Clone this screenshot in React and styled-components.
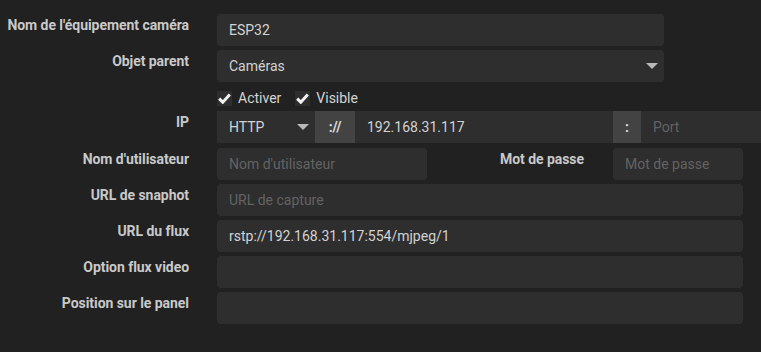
import React from "react";
import styled, { createGlobalStyle } from "styled-components";

const Global = createGlobalStyle`
  html, body { margin: 0; padding: 0; background: #212121; }
  body { font-family: Roboto, "Noto Sans", sans-serif; overflow: hidden; }
  * { box-sizing: border-box; }
`;

const Page = styled.div`
  width: 761px;
  height: 352px;
  overflow: hidden;
  background: #212121;
  padding-top: 14px;
`;

const Form = styled.div`
  display: flex;
  flex-direction: column;
  gap: 4px;
`;

const Row = styled.div`
  display: grid;
  grid-template-columns: 189px ${(p) => p.$width || "526px"};
  column-gap: 28px;
  align-items: start;
  margin-top: ${(p) => p.$mt || 0}px;
`;

const Label = styled.div`
  text-align: right;
  font-weight: 700;
  font-size: 14px;
  line-height: 16px;
  color: #c9c9c9;
  padding-top: 3px;
  white-space: nowrap;
  letter-spacing: -0.05px;
`;

const Field = styled.div`
  height: 32px;
  border-radius: 4px;
  background: #2e2e2e;
  display: flex;
  align-items: center;
  padding: 0 12px;
  font-size: 14px;
  color: ${(p) => (p.$placeholder ? "#636363" : "#d2d2d2")};
  width: ${(p) => p.$w || "auto"};
  flex: ${(p) => (p.$w ? "none" : "1")};
  position: relative;
`;

const Arrow = styled.span`
  position: absolute;
  right: ${(p) => p.$right || 6}px;
  top: 50%;
  margin-top: -3px;
  width: 0;
  height: 0;
  border-left: 6px solid transparent;
  border-right: 6px solid transparent;
  border-top: 6px solid #b8b8b8;
`;

const Checks = styled.div`
  display: flex;
  align-items: center;
  gap: 14px;
  height: 24px;
`;

const Check = styled.label`
  display: flex;
  align-items: center;
  gap: 6px;
  font-size: 14px;
  color: #d4d4d4;
`;

const Box = styled.span`
  width: 15px;
  height: 15px;
  background: #2e2e2e;
  display: flex;
  align-items: center;
  justify-content: center;
`;

const Group = styled.div`
  display: flex;
  height: 32px;
  width: 560px;
`;

const GroupSelect = styled(Field)`
  border-radius: 0;
`;

const Addon = styled.div`
  width: ${(p) => p.$w}px;
  flex: none;
  background: #434343;
  color: #dcdcdc;
  font-size: 14px;
  display: flex;
  align-items: center;
  justify-content: center;
  font-weight: ${(p) => (p.$bold ? 700 : 400)};
`;

const Split = styled.div`
  display: flex;
  align-items: flex-start;
`;

const SubLabel = styled(Label)`
  width: 157px;
  margin-right: 29px;
`;

const CheckIcon = () => (
  <svg width="13" height="11" viewBox="0 0 13 11">
    <path d="M1.2 5.6 L4.8 9.2 L11.8 1.6" fill="none" stroke="#f2f2f2" strokeWidth="3" strokeLinejoin="miter" />
  </svg>
);

export default function App() {
  return (
    <Page>
      <Global />
      <Form>
        <Row $width="447px">
          <Label>Nom de l'équipement caméra</Label>
          <Field>ESP32</Field>
        </Row>
        <Row $width="447px">
          <Label>Objet parent</Label>
          <Field>
            Caméras
            <Arrow />
          </Field>
        </Row>
        <Row>
          <div />
          <Checks>
            <Check>
              <Box><CheckIcon /></Box>
              Activer
            </Check>
            <Check>
              <Box><CheckIcon /></Box>
              Visible
            </Check>
          </Checks>
        </Row>
        <Row $mt={-3} $width="560px">
          <Label>IP</Label>
          <Group>
            <GroupSelect $w="98px">
              HTTP
              <Arrow $right={6} />
            </GroupSelect>
            <Addon $w={40} $bold>://</Addon>
            <GroupSelect $w="258px">192.168.31.117</GroupSelect>
            <Addon $w={28} $bold>:</Addon>
            <GroupSelect $w="140px" $placeholder>Port</GroupSelect>
          </Group>
        </Row>
        <Row $mt={1}>
          <Label>Nom d'utilisateur</Label>
          <Split>
            <Field $w="210px" $placeholder>Nom d'utilisateur</Field>
            <SubLabel>Mot de passe</SubLabel>
            <Field $w="130px" $placeholder>Mot de passe</Field>
          </Split>
        </Row>
        <Row>
          <Label>URL de snaphot</Label>
          <Field $placeholder>URL de capture</Field>
        </Row>
        <Row>
          <Label>URL du flux</Label>
          <Field>rstp://192.168.31.117:554/mjpeg/1</Field>
        </Row>
        <Row>
          <Label>Option flux video</Label>
          <Field />
        </Row>
        <Row>
          <Label>Position sur le panel</Label>
          <Field />
        </Row>
      </Form>
    </Page>
  );
}
